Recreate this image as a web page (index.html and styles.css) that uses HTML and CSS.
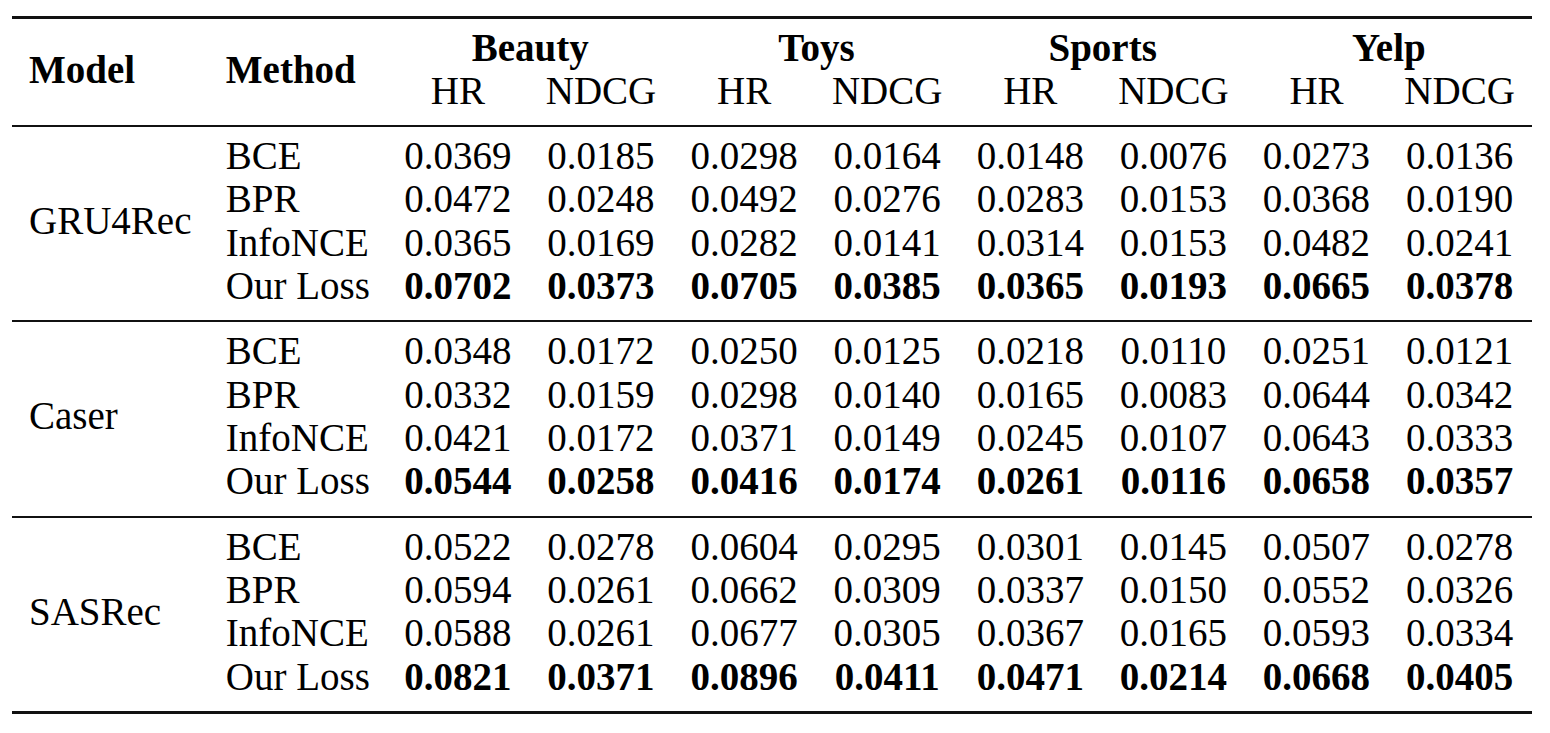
FILE: index.html
```html
<!DOCTYPE html>
<html lang="en">
<head>
<meta charset="utf-8">
<title>Results</title>
<link rel="stylesheet" href="styles.css">
</head>
<body>
<table class="results">
  <thead>
    <tr class="head-top">
      <th class="label" rowspan="2">Model</th>
      <th class="label" rowspan="2">Method</th>
      <th class="dataset" colspan="2">Beauty</th>
      <th class="dataset" colspan="2">Toys</th>
      <th class="dataset" colspan="2">Sports</th>
      <th class="dataset" colspan="2">Yelp</th>
    </tr>
    <tr class="head-sub">
      <th class="metric">HR</th><th class="metric">NDCG</th>
      <th class="metric">HR</th><th class="metric">NDCG</th>
      <th class="metric">HR</th><th class="metric">NDCG</th>
      <th class="metric">HR</th><th class="metric">NDCG</th>
    </tr>
  </thead>
  <tbody>
    <tr class="first">
      <td class="model" rowspan="4">GRU4Rec</td>
      <td class="method">BCE</td>
      <td>0.0369</td><td>0.0185</td><td>0.0298</td><td>0.0164</td><td>0.0148</td><td>0.0076</td><td>0.0273</td><td>0.0136</td>
    </tr>
    <tr>
      <td class="method">BPR</td>
      <td>0.0472</td><td>0.0248</td><td>0.0492</td><td>0.0276</td><td>0.0283</td><td>0.0153</td><td>0.0368</td><td>0.0190</td>
    </tr>
    <tr>
      <td class="method">InfoNCE</td>
      <td>0.0365</td><td>0.0169</td><td>0.0282</td><td>0.0141</td><td>0.0314</td><td>0.0153</td><td>0.0482</td><td>0.0241</td>
    </tr>
    <tr class="last best">
      <td class="method">Our Loss</td>
      <td>0.0702</td><td>0.0373</td><td>0.0705</td><td>0.0385</td><td>0.0365</td><td>0.0193</td><td>0.0665</td><td>0.0378</td>
    </tr>
  </tbody>
  <tbody>
    <tr class="first">
      <td class="model" rowspan="4">Caser</td>
      <td class="method">BCE</td>
      <td>0.0348</td><td>0.0172</td><td>0.0250</td><td>0.0125</td><td>0.0218</td><td>0.0110</td><td>0.0251</td><td>0.0121</td>
    </tr>
    <tr>
      <td class="method">BPR</td>
      <td>0.0332</td><td>0.0159</td><td>0.0298</td><td>0.0140</td><td>0.0165</td><td>0.0083</td><td>0.0644</td><td>0.0342</td>
    </tr>
    <tr>
      <td class="method">InfoNCE</td>
      <td>0.0421</td><td>0.0172</td><td>0.0371</td><td>0.0149</td><td>0.0245</td><td>0.0107</td><td>0.0643</td><td>0.0333</td>
    </tr>
    <tr class="last best">
      <td class="method">Our Loss</td>
      <td>0.0544</td><td>0.0258</td><td>0.0416</td><td>0.0174</td><td>0.0261</td><td>0.0116</td><td>0.0658</td><td>0.0357</td>
    </tr>
  </tbody>
  <tbody>
    <tr class="first">
      <td class="model" rowspan="4">SASRec</td>
      <td class="method">BCE</td>
      <td>0.0522</td><td>0.0278</td><td>0.0604</td><td>0.0295</td><td>0.0301</td><td>0.0145</td><td>0.0507</td><td>0.0278</td>
    </tr>
    <tr>
      <td class="method">BPR</td>
      <td>0.0594</td><td>0.0261</td><td>0.0662</td><td>0.0309</td><td>0.0337</td><td>0.0150</td><td>0.0552</td><td>0.0326</td>
    </tr>
    <tr>
      <td class="method">InfoNCE</td>
      <td>0.0588</td><td>0.0261</td><td>0.0677</td><td>0.0305</td><td>0.0367</td><td>0.0165</td><td>0.0593</td><td>0.0334</td>
    </tr>
    <tr class="last best">
      <td class="method">Our Loss</td>
      <td>0.0821</td><td>0.0371</td><td>0.0896</td><td>0.0411</td><td>0.0471</td><td>0.0214</td><td>0.0668</td><td>0.0405</td>
    </tr>
  </tbody>
</table>
</body>
</html>
```
FILE: styles.css
```css
html, body {
  margin: 0;
  padding: 0;
  background: #ffffff;
}

body {
  font-family: "Liberation Serif", "Times New Roman", serif;
  color: #000000;
}

.results {
  margin: 16px 0 0 12px;
  width: 1520px;
  border-collapse: separate;
  border-spacing: 0;
  border-top: 3px solid #111111;
  border-bottom: 3px solid #111111;
  font-size: 39px;
  line-height: 43.33px;
}

.results th,
.results td {
  padding: 0 17px;
  text-align: center;
  white-space: nowrap;
  vertical-align: middle;
}

.results th {
  font-weight: normal;
}

.results th.label,
.results th.dataset {
  font-weight: bold;
}

.results th.label,
.results td.model,
.results td.method {
  text-align: left;
}

.head-top th {
  padding-top: 7px;
}

.head-sub th {
  padding-bottom: 12.5px;
}

.results th.label {
  padding-top: 7px;
  padding-bottom: 12.5px;
}

.results tr.first td {
  border-top: 2px solid #111111;
  padding-top: 7px;
}

.results tr.last td {
  padding-bottom: 13px;
}

.results td.model {
  padding-bottom: 13px;
}

.results tr.best td:not(.method) {
  font-weight: bold;
}
```
